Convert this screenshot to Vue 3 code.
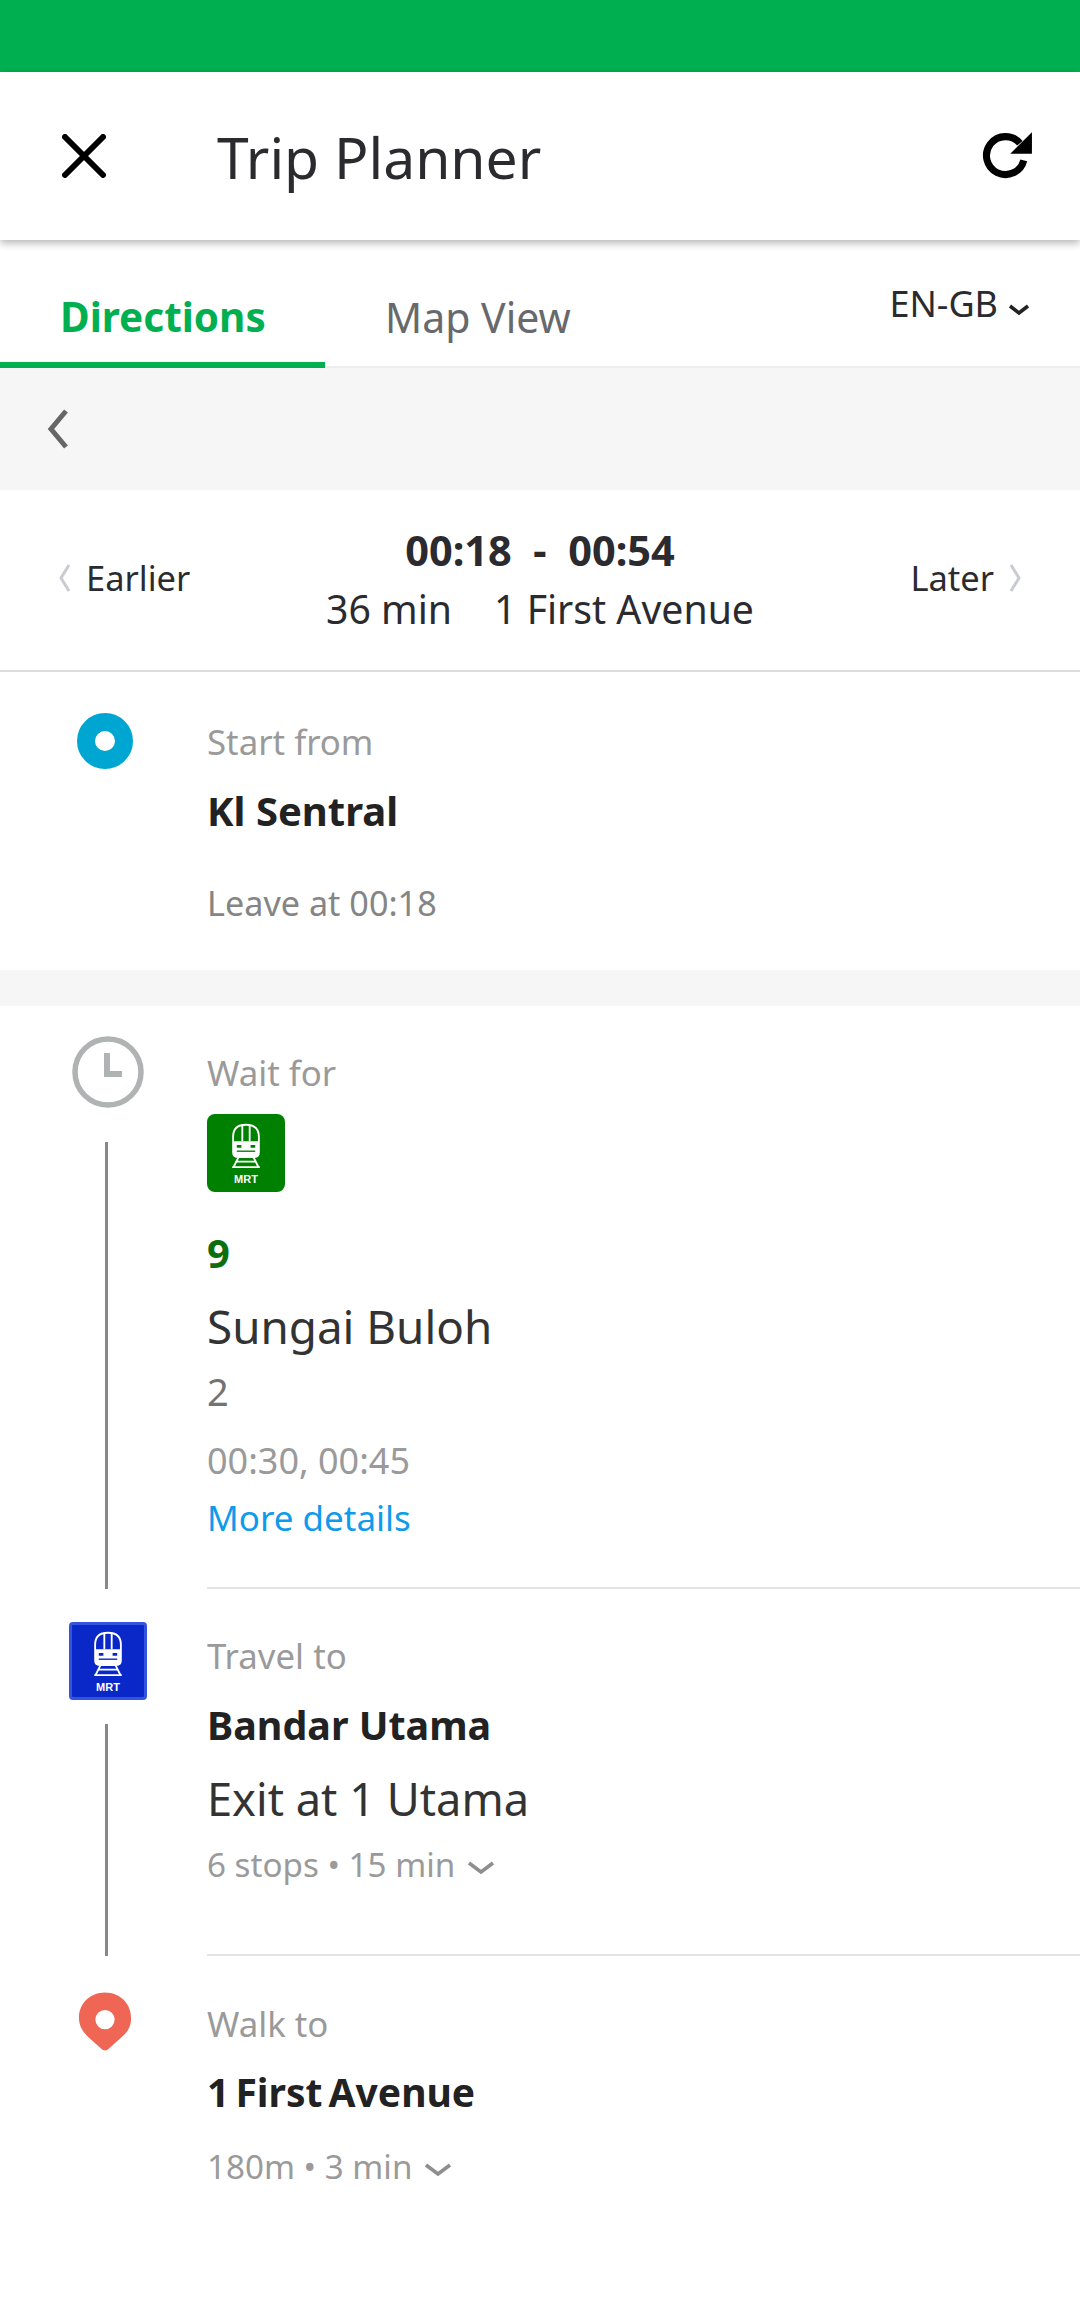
<script setup>
const tabs = ['Directions', 'Map View']
</script>

<template>
  <div class="page">
    <div class="status"></div>
    <header class="head">
      <svg class="close" viewBox="0 0 44 44"><path d="M3 3 41 41M41 3 3 41" fill="none" stroke="#000" stroke-width="6" stroke-linecap="round" /></svg>
      <div class="title">Trip Planner</div>
      <svg class="refresh" viewBox="0 0 48 48"><path d="M39.500 28a17.500 17.500 0 1 1-3.600-15.700" fill="none" stroke="#000" stroke-width="6.500" /><path d="M47 2v20H27z" fill="#000" /></svg>
    </header>
    <nav class="tabs">
      <div v-for="(t, i) in tabs" :key="t" class="tab" :class="{ 'tab--on': i === 0 }">{{ t }}</div>
      <div class="lang">EN-GB
        <svg class="lang-arrow" viewBox="0 0 22 12"><path d="M2 2 11 9 20 2" fill="none" stroke="#222" stroke-width="3.500" /></svg>
      </div>
    </nav>
    <div class="back">
      <svg class="back-icon" viewBox="0 0 24 40"><path d="M20 2 5 20 20 38" fill="none" stroke="#666" stroke-width="5" /></svg>
    </div>
    <section class="times">
      <div class="nav-link">
        <svg class="chev" viewBox="0 0 14 30"><path d="M11 2 3 15 11 28" fill="none" stroke="#c8ccd0" stroke-width="3" /></svg>
        Earlier
      </div>
      <div class="times-mid">
        <div class="range">00:18&nbsp; - &nbsp;00:54</div>
        <div class="summary"><span>36 min</span><span>1 First Avenue</span></div>
      </div>
      <div class="nav-link nav-link--end">
        Later
        <svg class="chev" viewBox="0 0 14 30"><path d="M3 2 11 15 3 28" fill="none" stroke="#c8ccd0" stroke-width="3" /></svg>
      </div>
    </section>

    <section class="step step--start">
      <div class="rail">
        <div class="dot"></div>
      </div>
      <div class="body">
        <div class="label">Start from</div>
        <div class="stop">Kl Sentral</div>
        <div class="leave">Leave at 00:18</div>
      </div>
    </section>

    <div class="gap"></div>

    <section class="step step--wait">
      <div class="rail">
        <svg class="clock" viewBox="0 0 72 72"><circle cx="36" cy="36" r="33" fill="none" stroke="#b0b3b3" stroke-width="5.500" /><path d="M35 17V38H50" fill="none" stroke="#b0b3b3" stroke-width="6" /></svg>
        <div class="line"></div>
      </div>
      <div class="body body--line">
        <div class="label">Wait for</div>
        <div class="badge badge--green">
          <svg class="train" viewBox="0 0 34 50"><path d="M3 16C3 7 8 3 17 3s14 4 14 13v17c0 3-2 5-5 5H8c-3 0-5-2-5-5z" fill="none" stroke="#fff" stroke-width="2" /><path d="M3 21h28v13c0 2-2 4-4 4H7c-2 0-4-2-4-4z" fill="#fff" /><path d="M13 3v18M21 3v18M9 38 3 50M25 38l6 12M2 49h30M7 43h20" fill="none" stroke="#fff" stroke-width="2" /><path d="M7 25h5v3H7zM22 25h5v3h-5z" fill="#008000" /><path d="M7 31h20v1.500H7z" fill="#008000" /></svg>
          <span class="badge-text">MRT</span>
        </div>
        <div class="route">9</div>
        <div class="dest">Sungai Buloh</div>
        <div class="plat">2</div>
        <div class="next">00:30, 00:45</div>
        <div class="more">More details</div>
      </div>
    </section>

    <section class="step step--travel">
      <div class="rail">
        <div class="badge badge--blue">
          <svg class="train" viewBox="0 0 34 50"><path d="M3 16C3 7 8 3 17 3s14 4 14 13v17c0 3-2 5-5 5H8c-3 0-5-2-5-5z" fill="none" stroke="#fff" stroke-width="2" /><path d="M3 21h28v13c0 2-2 4-4 4H7c-2 0-4-2-4-4z" fill="#fff" /><path d="M13 3v18M21 3v18M9 38 3 50M25 38l6 12M2 49h30M7 43h20" fill="none" stroke="#fff" stroke-width="2" /><path d="M7 25h5v3H7zM22 25h5v3h-5z" fill="#0a28c8" /><path d="M7 31h20v1.500H7z" fill="#0a28c8" /></svg>
          <span class="badge-text">MRT</span>
        </div>
        <div class="line"></div>
      </div>
      <div class="body body--line">
        <div class="label">Travel to</div>
        <div class="stop stop--travel">Bandar Utama</div>
        <div class="dest dest--exit">Exit at 1 Utama</div>
        <div class="meta">6 stops • 15 min
          <svg class="meta-arrow" viewBox="0 0 28 14"><path d="M2 2 14 11 26 2" fill="none" stroke="#8e8e8e" stroke-width="3.500" /></svg>
        </div>
      </div>
    </section>

    <section class="step step--walk">
      <div class="rail">
        <svg class="pin" viewBox="0 0 56 62"><path fill-rule="evenodd" d="M28 1C12.500 1 1 12.500 1 27c0 8 3.500 14 9 19.500L24.500 59.500c2 2 5 2 7 0L46 46.500C52.500 41 55 35 55 27 55 12.500 43.500 1 28 1Zm0 18a10 10 0 1 1 0 20 10 10 0 0 1 0-20Z" fill="#ef6655" /></svg>
      </div>
      <div class="body">
        <div class="label">Walk to</div>
        <div class="stop stop--walk">1 First Avenue</div>
        <div class="meta meta--walk">180m • 3 min
          <svg class="meta-arrow" viewBox="0 0 28 14"><path d="M2 2 14 11 26 2" fill="none" stroke="#8e8e8e" stroke-width="3.500" /></svg>
        </div>
      </div>
    </section>
  </div>
</template>

<style>
body {
  margin: 0;
  background: #fff;
}
</style>

<style scoped>
.page {
  width: 1080px;
  height: 2320px;
  overflow: hidden;
  background: #fff;
  font-family: 'Noto Sans', 'Open Sans', sans-serif;
  color: #2b2b2f;
}
.status {
  height: 72px;
  background: #00b050;
}
.head {
  position: relative;
  height: 168px;
  display: flex;
  align-items: center;
  background: #fff;
  box-shadow: 0 3px 8px rgba(0, 0, 0, 0.3);
}
.close {
  width: 44px;
  height: 44px;
  margin-left: 62px;
}
.title {
  margin-left: 111px;
  padding-top: 2px;
  font-size: 57px;
  line-height: 76px;
}
.refresh {
  width: 52px;
  height: 52px;
  margin-left: auto;
  margin-right: 47px;
}
.tabs {
  height: 128px;
  box-sizing: border-box;
  display: flex;
  position: relative;
  border-bottom: 2px solid #eee;
}
.tab {
  width: 325px;
  box-sizing: border-box;
  padding: 48px 0 0 60px;
  margin-bottom: -2px;
  font-size: 41px;
  line-height: 58px;
  color: #68696c;
}
.tab--on {
  font-size: 40.500px;
  font-weight: 700;
  color: #00b050;
  border-bottom: 6px solid #00b050;
}
.lang {
  margin-left: auto;
  margin-right: 50px;
  padding-top: 41px;
  font-size: 36px;
  line-height: 46px;
  color: #2b2b2f;
  display: flex;
  align-items: flex-start;
}
.lang-arrow {
  width: 22px;
  height: 12px;
  margin: 23px 0 0 10px;
}
.back {
  height: 122px;
  display: flex;
  align-items: center;
  background: #f6f6f6;
}
.back-icon {
  width: 24px;
  height: 40px;
  margin-left: 46px;
}
.times {
  height: 182px;
  box-sizing: border-box;
  display: grid;
  grid-template-columns: 1fr auto 1fr;
  align-items: center;
  padding: 0 58px;
  border-bottom: 2px solid #dcdcdc;
}
.nav-link {
  display: flex;
  align-items: center;
  gap: 14px;
  font-size: 34.500px;
  line-height: 48px;
  margin-top: -5px;
}
.nav-link--end {
  justify-content: flex-end;
}
.chev {
  width: 14px;
  height: 30px;
}
.times-mid {
  text-align: center;
  margin-top: -2px;
}
.range {
  font-size: 41.500px;
  font-weight: 700;
  line-height: 60px;
}
.summary {
  display: flex;
  gap: 42px;
  font-size: 39.200px;
  line-height: 58px;
}
.step {
  display: flex;
}
.rail {
  width: 207px;
  flex: none;
  box-sizing: border-box;
  padding-left: 5px;
  display: flex;
  flex-direction: column;
  align-items: center;
}
.body {
  flex: 1;
  min-width: 0;
}
.body--line {
  border-bottom: 2px solid #e3e3e3;
}
.label {
  font-size: 34.800px;
  line-height: 48px;
  color: #9a9a9a;
}
.stop {
  margin-top: 16px;
  font-size: 40px;
  font-weight: 700;
  line-height: 56px;
  color: #222;
}
.stop--travel {
  font-size: 39.400px;
  margin-top: 17px;
}
.stop--walk {
  font-size: 39px;
  word-spacing: -4px;
}
.step--start {
  height: 298px;
}
.step--start .rail {
  padding-top: 41px;
}
.step--start .body {
  padding-top: 46px;
}
.dot {
  width: 20px;
  height: 20px;
  border: 18.500px solid #00a6d2;
  border-radius: 50%;
  background: #fff;
  margin-left: -2px;
}
.step--start .stop {
  margin-top: 17px;
}
.leave {
  margin-top: 40px;
  font-size: 34.200px;
  line-height: 48px;
  color: #858585;
}
.gap {
  height: 36px;
  background: #f6f6f6;
}
.step--wait {
  height: 583px;
}
.step--wait .rail {
  padding-top: 30px;
}
.step--wait .body {
  padding-top: 43px;
}
.clock {
  width: 72px;
  height: 72px;
  flex: none;
  margin-left: 4px;
}
.line {
  flex: 1;
  width: 3px;
  background: #87878c;
}
.step--wait .line {
  margin-top: 34px;
}
.badge {
  width: 78px;
  height: 78px;
  box-sizing: border-box;
  flex: none;
  display: flex;
  flex-direction: column;
  align-items: center;
  padding-top: 8px;
  color: #fff;
}
.badge--green {
  margin-top: 17px;
  background: #008000;
  border-radius: 8px;
}
.badge--blue {
  margin-left: 4px;
  background: #0a28c8;
  border: 3px solid #3355dd;
  border-radius: 4px;
  padding-top: 5px;
}
.train {
  width: 32px;
  height: 46px;
}
.badge-text {
  font-family: 'Liberation Sans', Arial, sans-serif;
  font-size: 11px;
  font-weight: 700;
  line-height: 12px;
  margin-top: 5px;
}
.route {
  margin-top: 33px;
  font-size: 40px;
  font-weight: 700;
  line-height: 56px;
  color: #0d6e0d;
}
.dest {
  margin-top: 15px;
  font-size: 45.800px;
  line-height: 60px;
  color: #333;
}
.plat {
  margin-top: 9px;
  font-size: 38px;
  line-height: 52px;
  color: #737373;
}
.next {
  margin-top: 20px;
  font-size: 36px;
  line-height: 48px;
  color: #9a9a9a;
}
.more {
  margin-top: 9px;
  font-size: 35px;
  line-height: 48px;
  color: #0f9bec;
}
.step--travel {
  height: 367px;
}
.step--travel .rail {
  padding-top: 33px;
}
.step--travel .body {
  padding-top: 43px;
}
.step--travel .line {
  margin-top: 24px;
}
.dest--exit {
  margin-top: 16px;
  font-size: 45.200px;
}
.meta {
  margin-top: 12px;
  display: flex;
  align-items: center;
  font-size: 33.200px;
  line-height: 48px;
  color: #9a9a9a;
  gap: 12px;
}
.meta-arrow {
  width: 28px;
  height: 14px;
  margin-top: 6px;
}
.step--walk .rail {
  padding-top: 35px;
}
.step--walk .body {
  padding-top: 44px;
}
.pin {
  width: 54px;
  height: 61px;
  margin-left: -2px;
}
.meta--walk {
  margin-top: 23px;
}
</style>
